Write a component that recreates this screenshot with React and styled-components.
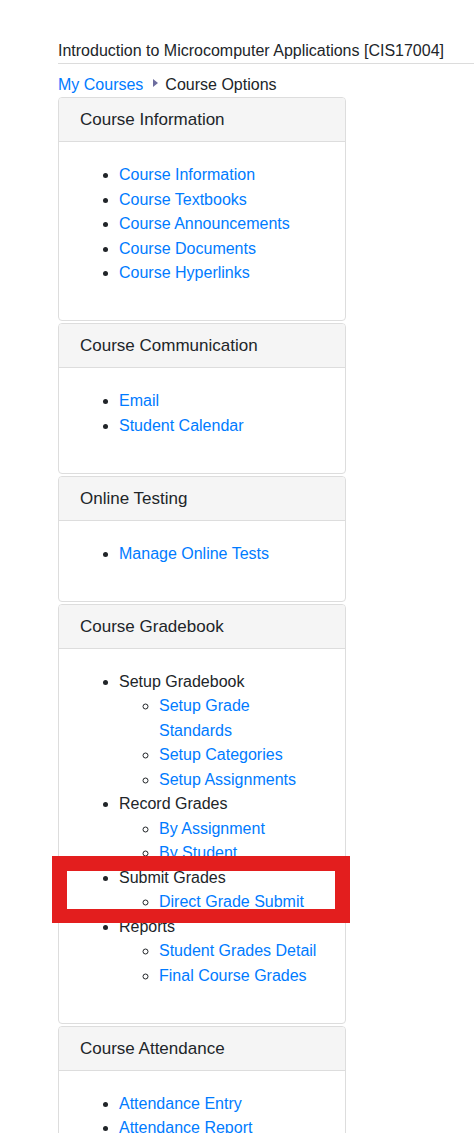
import React from 'react';
import styled, { createGlobalStyle } from 'styled-components';

const GlobalStyle = createGlobalStyle`
  html, body {
    margin: 0;
    padding: 0;
    background: #ffffff;
  }
  body {
    font-family: "Liberation Sans", Arial, sans-serif;
    font-size: 16px;
    line-height: 24.5px;
    color: #212529;
  }
`;

const Page = styled.div`
  position: relative;
  padding: 39px 0 0 58px;
  height: 1133px;
  box-sizing: border-box;
  overflow: hidden;
`;

const CourseTitle = styled.h1`
  margin: 0;
  font-size: 16px;
  font-weight: normal;
  line-height: 24px;
  border-bottom: 1px solid #dcdcdc;
  white-space: nowrap;
`;

const Breadcrumb = styled.div`
  display: flex;
  align-items: flex-start;
  margin-top: 9px;
  line-height: 24px;
`;

const Crumb = styled.a`
  color: #007bff;
  text-decoration: none;
`;

const Caret = styled.span`
  display: inline-block;
  width: 0;
  height: 0;
  margin: 6px 7px 0 10px;
  border-left: 5px solid #6d6d9f;
  border-top: 4px solid transparent;
  border-bottom: 4px solid transparent;
`;

const Panels = styled.div`
  display: flex;
  flex-direction: column;
  gap: 2px;
  width: 288px;
`;

const Panel = styled.section`
  border: 1px solid #dddddd;
  border-radius: 4px;
  background: #ffffff;
  overflow: hidden;
`;

const PanelHeading = styled.div`
  background: #f5f5f5;
  border-bottom: 1px solid #dddddd;
  padding: 9px 21px;
  font-size: 17px;
  line-height: 25px;
`;

const PanelBody = styled.div`
  padding: 21px 20px 34.5px;
`;

const List = styled.ul`
  margin: 0;
  padding-left: 40px;
  list-style: ${p => (p.$nested ? 'circle' : 'disc')};
`;

const Item = styled.li``;

const Link = styled.a`
  color: #007bff;
  text-decoration: none;
`;

const Highlight = styled.div`
  position: absolute;
  left: 52px;
  top: 856px;
  width: 298px;
  height: 67px;
  box-sizing: border-box;
  border: 15px solid #e31e1e;
  border-bottom-width: 14px;
  pointer-events: none;
`;

const sections = [
  {
    title: 'Course Information',
    items: [
      { label: 'Course Information', link: true },
      { label: 'Course Textbooks', link: true },
      { label: 'Course Announcements', link: true },
      { label: 'Course Documents', link: true },
      { label: 'Course Hyperlinks', link: true },
    ],
  },
  {
    title: 'Course Communication',
    items: [
      { label: 'Email', link: true },
      { label: 'Student Calendar', link: true },
    ],
  },
  {
    title: 'Online Testing',
    items: [{ label: 'Manage Online Tests', link: true }],
  },
  {
    title: 'Course Gradebook',
    items: [
      {
        label: 'Setup Gradebook',
        children: ['Setup Grade Standards', 'Setup Categories', 'Setup Assignments'],
      },
      { label: 'Record Grades', children: ['By Assignment', 'By Student'] },
      { label: 'Submit Grades', children: ['Direct Grade Submit'] },
      { label: 'Reports', children: ['Student Grades Detail', 'Final Course Grades'] },
    ],
  },
  {
    title: 'Course Attendance',
    items: [
      { label: 'Attendance Entry', link: true },
      { label: 'Attendance Report', link: true },
    ],
  },
];

export default function App() {
  return (
    <>
      <GlobalStyle />
      <Page>
        <CourseTitle>Introduction to Microcomputer Applications [CIS17004]</CourseTitle>
        <Breadcrumb>
          <Crumb href="#">My Courses</Crumb>
          <Caret />
          <span>Course Options</span>
        </Breadcrumb>
        <Panels>
          {sections.map(section => (
            <Panel key={section.title}>
              <PanelHeading>{section.title}</PanelHeading>
              <PanelBody>
                <List>
                  {section.items.map(item => (
                    <Item key={item.label}>
                      {item.link ? <Link href="#">{item.label}</Link> : item.label}
                      {item.children && (
                        <List $nested>
                          {item.children.map(child => (
                            <Item key={child}>
                              <Link href="#">{child}</Link>
                            </Item>
                          ))}
                        </List>
                      )}
                    </Item>
                  ))}
                </List>
              </PanelBody>
            </Panel>
          ))}
        </Panels>
        <Highlight />
      </Page>
    </>
  );
}
